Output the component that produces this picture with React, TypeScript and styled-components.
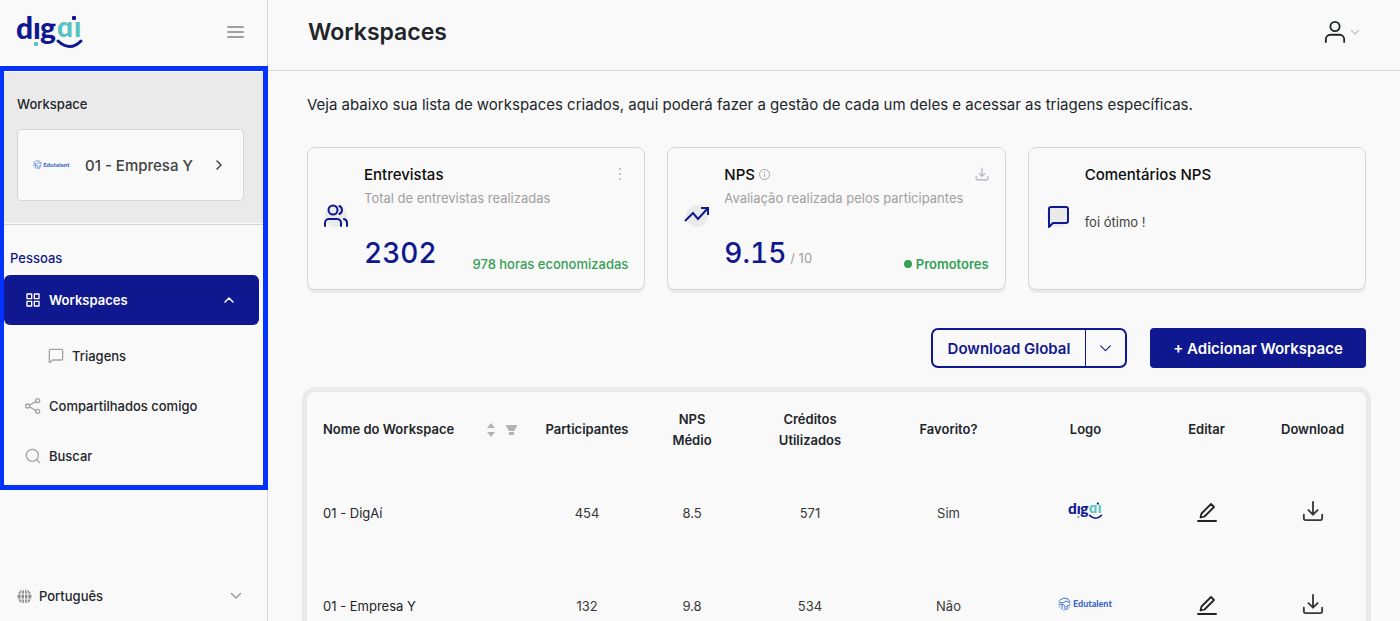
import React from "react";
import styled, { createGlobalStyle, css } from "styled-components";

const navy = "#10188f";
const ink = "#212529";
const paper = "#f9f9f9";
const mist = "#eaeaea";
const line = "#d6d6d6";
const green = "#34a055";
const teal = "#54c5c0";

const GlobalStyle = createGlobalStyle`
  *, *::before, *::after { box-sizing: border-box; }
  body {
    margin: 0;
    background: ${paper};
    color: ${ink};
    font-family: Inter, "Liberation Sans", sans-serif;
    font-size: 14px;
  }
  button, select { font: inherit; color: inherit; }
  button { cursor: pointer; }
  h1, h2, p { margin: 0; }
`;

const Shell = styled.div`
  display: grid;
  grid-template-columns: 268px minmax(0, 1fr);
  height: 100vh;
`;

const Sidebar = styled.aside`
  display: flex;
  flex-direction: column;
  border-right: 1px solid ${line};
`;

const Brand = styled.div`
  display: flex;
  flex: none;
  align-items: center;
  justify-content: space-between;
  height: 66px;
  padding: 0 23px 2px 16px;
`;

const IconButton = styled.button`
  display: inline-flex;
  align-items: center;
  justify-content: center;
  padding: 0;
  border: 0;
  background: none;
`;

const Highlight = styled.div`
  display: flex;
  flex-direction: column;
  margin-right: -1px;
  padding: 1px 0 4px;
  border: 5px solid #0433ff;
  border-left-width: 4px;
`;

const Current = styled.section`
  padding: 22px 19px 22px 13px;
  background: ${mist};
  box-shadow: 0 1px 0 ${paper}, 0 2px 0 ${line};
`;

const CurrentLabel = styled.h2`
  margin-bottom: 15px;
  font-size: 13px;
  font-weight: 500;
  line-height: 20px;
`;

const CurrentButton = styled.button`
  display: grid;
  grid-template-columns: 38px 1fr 12px;
  gap: 14px;
  align-items: center;
  width: 100%;
  height: 72px;
  padding: 0 18px 0 15px;
  border: 1px solid ${line};
  border-radius: 4px;
  background: ${paper};
  color: #424242;
  font-size: 15px;
  font-weight: 500;
  text-align: left;
  white-space: nowrap;
`;

const Nav = styled.nav`
  padding-top: 25px;
`;

const NavTitle = styled.h2`
  margin-bottom: 7px;
  padding-left: 6px;
  color: ${navy};
  font-size: 13px;
  font-weight: 500;
  line-height: 20px;
`;

const NavList = styled.ul`
  margin: 0 4px 0 0;
  padding: 0;
  list-style: none;
`;

const NavLink = styled.a<{ $active?: boolean; $nested?: boolean }>`
  display: flex;
  align-items: center;
  gap: 8px;
  height: 50px;
  padding: 0 24px 0 ${(p) => (p.$nested ? 44 : 21)}px;
  border-radius: 6px;
  color: ${ink};
  font-size: 13px;
  font-weight: 500;
  text-decoration: none;
  svg { color: #a3a3a3; }
  svg:last-of-type:not(:first-of-type) { margin-left: auto; }
  ${(p) =>
    p.$active &&
    css`
      margin-bottom: 6px;
      background: ${navy};
      color: #fff;
      font-weight: 600;
      svg { color: #fff; }
    `}
`;

const Language = styled.label`
  display: flex;
  align-items: center;
  gap: 7px;
  margin-top: auto;
  padding: 0 25px 14px 17px;
  color: #9b9b9b;
`;

const LanguageSelect = styled.select`
  flex: 1;
  height: 22px;
  padding: 0;
  border: 0;
  background: none;
  appearance: none;
  color: ${ink};
  font-size: 13px;
  font-weight: 500;
`;

const Page = styled.main`
  min-width: 0;
  overflow-y: auto;
  scrollbar-width: none;
`;

const TopBar = styled.header`
  display: flex;
  align-items: center;
  justify-content: space-between;
  height: 71px;
  padding: 0 40px 6px;
  border-bottom: 1px solid ${line};
`;

const Title = styled.h1`
  font-size: 23px;
  font-weight: 600;
  line-height: 32px;
`;

const UserButton = styled(IconButton)`
  gap: 4px;
`;

const Content = styled.div`
  padding: 22px 34px 22px 39px;
`;

const Intro = styled.p`
  margin-bottom: 30px;
  font-size: 15px;
  line-height: 24px;
`;

const Cards = styled.div`
  display: grid;
  grid-template-columns: repeat(3, minmax(0, 1fr));
  gap: 22px;
  margin-bottom: 38px;
`;

const Card = styled.section`
  display: grid;
  grid-template-columns: 24px minmax(0, 1fr);
  gap: 16px;
  height: 143px;
  padding: 14px 16px 12px 16px;
  border: 1px solid ${line};
  border-radius: 8px;
  box-shadow: 0 3px 0 ${mist};
`;

const CardIcon = styled.div`
  display: flex;
  align-items: center;
  padding-bottom: 8px;
  color: ${navy};
  svg { overflow: visible; }
`;

const CardBody = styled.div`
  display: flex;
  flex-direction: column;
`;

const CardHead = styled.div`
  display: flex;
  align-items: center;
  gap: 4px;
  height: 24px;
  color: #aab0c0;
  > button { margin-left: auto; color: inherit; }
`;

const CardTitle = styled.h2`
  color: #0c0c0c;
  font-size: 15px;
  font-weight: 500;
`;

const CardNote = styled.p`
  color: #a0a0a0;
  font-size: 13px;
  line-height: 24px;
  white-space: nowrap;
`;

const CardFoot = styled.div`
  display: flex;
  align-items: flex-end;
  justify-content: space-between;
  margin-top: auto;
  white-space: nowrap;
`;

const Figure = styled.p`
  display: flex;
  align-items: baseline;
  gap: 4px;
  color: ${navy};
  font-size: 28px;
  font-variant-numeric: tabular-nums;
  font-weight: 500;
  line-height: 48px;
  small {
    color: #a0a0a0;
    font-size: 13px;
    font-variant-numeric: normal;
    font-weight: 400;
    line-height: 24px;
  }
`;

const Outcome = styled.span<{ $strong?: boolean }>`
  display: flex;
  align-items: center;
  gap: 4px;
  color: ${green};
  font-size: 13px;
  font-weight: ${(p) => (p.$strong ? 600 : 500)};
  line-height: 26px;
`;

const Dot = styled.i`
  width: 8px;
  height: 8px;
  border-radius: 50%;
  background: ${green};
`;

const Comment = styled.p`
  margin-top: 24px;
  color: #424242;
  font-size: 13px;
  line-height: 24px;
`;

const Actions = styled.div`
  display: flex;
  justify-content: flex-end;
  gap: 23px;
  height: 40px;
  margin-bottom: 24px;
  color: ${navy};
  font-size: 15px;
  font-weight: 600;
`;

const Split = styled.div`
  display: flex;
  border: 2px solid ${navy};
  border-radius: 7px;
`;

const SplitButton = styled.button`
  display: flex;
  align-items: center;
  justify-content: center;
  width: 152px;
  padding: 0;
  border: 0;
  background: none;
  & + & {
    width: 40px;
    border-left: 1px solid ${navy};
  }
`;

const AddButton = styled.button`
  width: 216px;
  border: 0;
  border-radius: 4px;
  background: ${navy};
  color: #fff;
`;

const Panel = styled.div`
  padding-right: 6px;
  border-radius: 8px;
  box-shadow: 0 0 0 5px ${mist};
`;

const Table = styled.table`
  width: 100%;
  table-layout: fixed;
  border-collapse: collapse;
  font-size: 13px;
  line-height: 21px;
  th { height: 75px; padding: 0; font-weight: 600; }
  td { height: 93px; padding: 0; text-align: center; color: #383838; }
  th:first-child, td:first-child { padding-left: 16px; text-align: left; color: ${ink}; }
`;

const LogoCell = styled.td`
  svg {
    display: block;
    margin: 0 auto 6px;
  }
`;

const NameHead = styled.div`
  display: flex;
  align-items: center;
  padding-right: 19px;
  button:first-of-type { margin-left: auto; margin-right: 10px; }
`;

type IconProps = { size: number; weight?: number; children: React.ReactNode };

const Icon = ({ size, weight = 2, children }: IconProps) => (
  <svg
    width={size}
    height={size}
    viewBox="0 0 24 24"
    fill="none"
    stroke="currentColor"
    strokeWidth={weight}
    strokeLinecap="round"
    strokeLinejoin="round"
    aria-hidden="true"
  >
    {children}
  </svg>
);

const Chevron = ({ d, size = 12, weight = 2 }: { d: "up" | "down" | "right"; size?: number; weight?: number }) => (
  <Icon size={size} weight={weight}>
    <path d={{ up: "M4 16l8-8 8 8", down: "M3 7l9 9 9-9", right: "M8 4l8 8-8 8" }[d]} />
  </Icon>
);

const Download = ({ size, weight }: { size: number; weight: number }) => (
  <Icon size={size} weight={weight}>
    <path d="M12 2v14M7 11l5 5 5-5M2 16v4a2 2 0 0 0 2 2h16a2 2 0 0 0 2-2v-4" />
  </Icon>
);

const Pencil = () => (
  <svg width="20" height="24" viewBox="0 0 20 24" fill="none" stroke="#222" strokeWidth="1.8" strokeLinejoin="round" aria-hidden="true">
    <path d="M4.500 14.500L14 5l3 3-9.500 9.500-4 1z" />
    <path d="M1 22h18" strokeWidth="2" strokeLinecap="round" />
  </svg>
);

const DigaiLogo = ({ width }: { width: number }) => (
  <svg width={width} height={(width * 34) / 68} viewBox="0 0 68 34" overflow="visible" role="img" aria-label="digai">
    <g fontFamily='Lato, "Noto Sans", sans-serif' fontWeight="900">
      <g fill={navy} fontSize="30">
        <text x="0" y="24">d</text>
        <text x="17" y="24">ı</text>
        <text x="24" y="24">g</text>
      </g>
      <g fill={teal} fontSize="28">
        <text x="41" y="22">ɑ</text>
        <text x="58" y="22">ı</text>
      </g>
    </g>
    <rect x="56" y="1" width="4" height="4" rx="1" fill={navy} />
    <rect x="18" y="27" width="4" height="4" rx="1" fill={teal} />
    <path d="M42 26q12 11 23 0" fill="none" stroke={navy} strokeWidth="3" strokeLinecap="round" />
  </svg>
);

const EdutalentLogo = ({ width }: { width: number }) => (
  <svg width={width} height={(width * 14) / 56} viewBox="0 0 56 14" overflow="visible" role="img" aria-label="Edutalent">
    <g fill="none" stroke="#4a6fd0" strokeWidth="1">
      <path d="M2 3l4-2 4 1 2 3M1 5l4 1 3-2 4 2M1 8l3-1 3 2v4M12 8l-3 1v4M4 7v5" />
      <path d="M1 3v7l4 3h3l4-3V4" stroke="#6fb4e4" strokeDasharray="2 1" />
    </g>
    <text x="15" y="10" fill="#3f66c9" fontFamily="Lato, sans-serif" fontWeight="900" fontSize="9">Edutalent</text>
  </svg>
);

const rows = [
  { name: "01 - DigAí", people: 454, nps: "8.5", credits: 571, favorite: "Sim", logo: <DigaiLogo width={35} /> },
  { name: "01 - Empresa Y", people: 132, nps: "9.8", credits: 534, favorite: "Não", logo: <EdutalentLogo width={56} /> },
];

const columns = [229, 102, 108, 128, 149, 125, 117, 95];

export default function App() {
  return (
    <>
      <GlobalStyle />
      <Shell>
        <Sidebar>
          <Brand>
            <DigaiLogo width={68} />
            <IconButton aria-label="Menu">
              <svg width="17" height="14" viewBox="0 0 17 14" stroke="#a0a0a0" strokeWidth="2" strokeLinecap="round" aria-hidden="true">
                <path d="M1 2h15M1 7h15M1 12h15" />
              </svg>
            </IconButton>
          </Brand>
          <Highlight>
            <Current>
              <CurrentLabel>Workspace</CurrentLabel>
              <CurrentButton>
                <EdutalentLogo width={38} />
                01 - Empresa Y
                <Chevron d="right" weight={3} />
              </CurrentButton>
            </Current>
            <Nav>
              <NavTitle>Pessoas</NavTitle>
              <NavList>
                <li>
                  <NavLink href="#workspaces" $active>
                    <Icon size={16}>
                      <path d="M3 3h7v7H3zM14 3h7v7h-7zM14 14h7v7h-7zM3 14h7v7H3z" />
                    </Icon>
                    Workspaces
                    <Chevron d="up" weight={3} />
                  </NavLink>
                </li>
                <li>
                  <NavLink href="#triagens" $nested>
                    <Icon size={16}>
                      <path d="M4 2h16a2 2 0 0 1 2 2v12a2 2 0 0 1-2 2H7l-5 4V4a2 2 0 0 1 2-2z" />
                    </Icon>
                    Triagens
                  </NavLink>
                </li>
                <li>
                  <NavLink href="#compartilhados">
                    <Icon size={16}>
                      <circle cx="4" cy="12" r="3" />
                      <circle cx="19" cy="4" r="3" />
                      <circle cx="19" cy="20" r="3" />
                      <path d="M7 10.500l9-5M7 13.500l9 5" />
                    </Icon>
                    Compartilhados comigo
                  </NavLink>
                </li>
                <li>
                  <NavLink href="#buscar">
                    <Icon size={16}>
                      <circle cx="11" cy="11" r="9" />
                      <path d="M18 18l4 4" />
                    </Icon>
                    Buscar
                  </NavLink>
                </li>
              </NavList>
            </Nav>
          </Highlight>
          <Language>
            <svg width="15" height="15" viewBox="0 0 15 15" aria-hidden="true">
              <circle cx="7.500" cy="7.500" r="7" fill="#8f8f8f" />
              <g fill="none" stroke={paper} strokeWidth="1">
                <path d="M0 5h15M0 10h15M7.500 0v15" />
                <ellipse cx="7.500" cy="7.500" rx="3.500" ry="7.500" />
              </g>
            </svg>
            <LanguageSelect aria-label="Idioma" defaultValue="pt">
              <option value="pt">Português</option>
            </LanguageSelect>
            <Chevron d="down" weight={3} />
          </Language>
        </Sidebar>

        <Page>
          <TopBar>
            <Title>Workspaces</Title>
            <UserButton aria-label="Conta">
              <Icon size={22}>
                <circle cx="12" cy="6" r="5" />
                <path d="M2 23v-3a5 5 0 0 1 5-5h10a5 5 0 0 1 5 5v3" />
              </Icon>
              <svg width="10" height="10" viewBox="0 0 10 10" fill="none" stroke="#c0c2cc" strokeWidth="1.300" aria-hidden="true">
                <path d="M1 3l4 4 4-4" />
              </svg>
            </UserButton>
          </TopBar>

          <Content>
            <Intro>
              Veja abaixo sua lista de workspaces criados, aqui poderá fazer a gestão de cada um deles e acessar as triagens
              específicas.
            </Intro>

            <Cards>
              <Card>
                <CardIcon>
                  <Icon size={24}>
                    <circle cx="12" cy="12" r="11" fill={mist} stroke="none" />
                    <circle cx="9" cy="6" r="4.500" />
                    <path d="M1 22v-3a4 4 0 0 1 4-4h8a4 4 0 0 1 4 4v3M23 22v-3a4 4 0 0 0-3-4M15.500 2a4.500 4.500 0 0 1 0 8" />
                  </Icon>
                </CardIcon>
                <CardBody>
                  <CardHead>
                    <CardTitle>Entrevistas</CardTitle>
                    <IconButton aria-label="Mais opções">
                      <svg width="16" height="14" viewBox="0 0 16 14" fill="currentColor" aria-hidden="true">
                        <circle cx="8" cy="2" r="1" />
                        <circle cx="8" cy="7" r="1" />
                        <circle cx="8" cy="12" r="1" />
                      </svg>
                    </IconButton>
                  </CardHead>
                  <CardNote>Total de entrevistas realizadas</CardNote>
                  <CardFoot>
                    <Figure>2302</Figure>
                    <Outcome>978 horas economizadas</Outcome>
                  </CardFoot>
                </CardBody>
              </Card>

              <Card>
                <CardIcon>
                  <Icon size={24}>
                    <circle cx="13" cy="12" r="11" fill={mist} stroke="none" />
                    <path d="M1 17l8-8 5 6L24 4M17 4h7v7" strokeLinecap="butt" strokeLinejoin="miter" />
                  </Icon>
                </CardIcon>
                <CardBody>
                  <CardHead>
                    <CardTitle>NPS</CardTitle>
                    <svg width="11" height="11" viewBox="0 0 11 11" fill="none" stroke="#a8a8a8" aria-hidden="true">
                      <circle cx="5.500" cy="5.500" r="5" />
                      <path d="M5.500 5v3M5.500 3v1" />
                    </svg>
                    <IconButton aria-label="Baixar NPS">
                      <Download size={14} weight={2} />
                    </IconButton>
                  </CardHead>
                  <CardNote>Avaliação realizada pelos participantes</CardNote>
                  <CardFoot>
                    <Figure>
                      9.15<small>/ 10</small>
                    </Figure>
                    <Outcome $strong>
                      <Dot />
                      Promotores
                    </Outcome>
                  </CardFoot>
                </CardBody>
              </Card>

              <Card>
                <CardIcon>
                  <Icon size={24}>
                    <circle cx="13" cy="12" r="11" fill={mist} stroke="none" />
                    <path d="M6 3h15a2 2 0 0 1 2 2v12a2 2 0 0 1-2 2H8l-4 4V5a2 2 0 0 1 2-2z" />
                  </Icon>
                </CardIcon>
                <CardBody>
                  <CardHead>
                    <CardTitle>Comentários NPS</CardTitle>
                  </CardHead>
                  <Comment>foi ótimo !</Comment>
                </CardBody>
              </Card>
            </Cards>

            <Actions>
              <Split>
                <SplitButton>Download Global</SplitButton>
                <SplitButton aria-label="Mais downloads">
                  <Chevron d="down" size={13} />
                </SplitButton>
              </Split>
              <AddButton>+ Adicionar Workspace</AddButton>
            </Actions>

            <Panel>
              <Table>
                <colgroup>
                  {columns.map((w, i) => (
                    <col key={i} width={w} />
                  ))}
                </colgroup>
                <thead>
                  <tr>
                    <th>
                      <NameHead>
                        Nome do Workspace
                        <IconButton aria-label="Ordenar">
                          <svg width="10" height="14" viewBox="0 0 10 14" fill="#b3b3b3" aria-hidden="true">
                            <path d="M1 5l4-5 4 5zM1 9l4 5 4-5z" />
                          </svg>
                        </IconButton>
                        <IconButton aria-label="Filtrar">
                          <svg width="11" height="12" viewBox="0 0 11 12" fill="#b3b3b3" aria-hidden="true">
                            <path d="M0 1h11v1L8 7H3L0 2zM3 8h5v3H3z" />
                          </svg>
                        </IconButton>
                      </NameHead>
                    </th>
                    <th>Participantes</th>
                    <th>
                      NPS
                      <br />
                      Médio
                    </th>
                    <th>
                      Créditos
                      <br />
                      Utilizados
                    </th>
                    <th>Favorito?</th>
                    <th>Logo</th>
                    <th>Editar</th>
                    <th>Download</th>
                  </tr>
                </thead>
                <tbody>
                  {rows.map((r) => (
                    <tr key={r.name}>
                      <td>{r.name}</td>
                      <td>{r.people}</td>
                      <td>{r.nps}</td>
                      <td>{r.credits}</td>
                      <td>{r.favorite}</td>
                      <LogoCell>{r.logo}</LogoCell>
                      <td>
                        <IconButton aria-label={`Editar ${r.name}`}>
                          <Pencil />
                        </IconButton>
                      </td>
                      <td>
                        <IconButton aria-label={`Baixar ${r.name}`}>
                          <Download size={22} weight={2} />
                        </IconButton>
                      </td>
                    </tr>
                  ))}
                </tbody>
              </Table>
            </Panel>
          </Content>
        </Page>
      </Shell>
    </>
  );
}
